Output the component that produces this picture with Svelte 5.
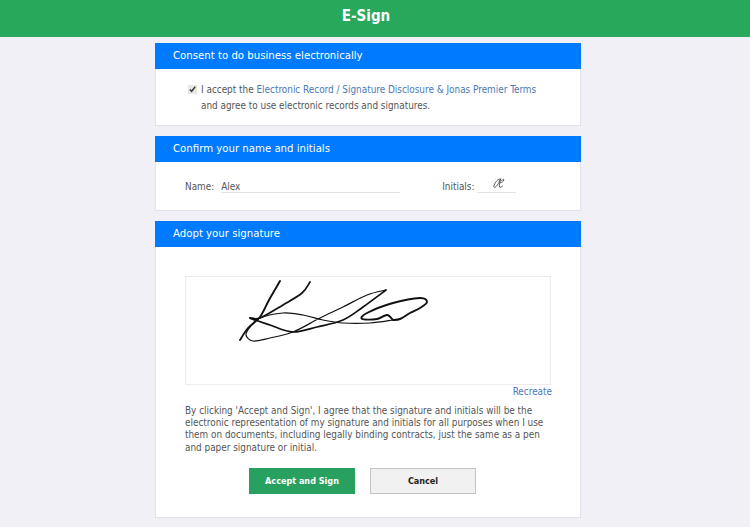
<script>
  let accepted = $state(true);
  let name = $state('Alex');

  // signature traced as point lists, smoothed in toPath
  const strokes = [
    { w: 1.9, pts: [[95, 5], [84, 24], [75, 41], [63, 52], [55, 64]] },
    { w: 1.7, pts: [[125, 6], [117, 17], [98, 29], [75, 42], [65, 42], [85, 49], [108, 56], [132, 51], [158, 44], [178, 31], [201, 14]] },
    { w: 1.2, pts: [[201, 14], [182, 19], [158, 31], [135, 42], [108, 56], [85, 62], [68, 65], [61, 59], [65, 51], [75, 42], [98, 37], [118, 39], [138, 44], [158, 47], [185, 47], [208, 44]] },
    { w: 1.9, pts: [[208, 44], [202, 39], [192, 43], [177, 43], [182, 37], [208, 27], [235, 22], [242, 26], [235, 32], [225, 37], [215, 43], [208, 44]] }
  ];

  function toPath(pts) {
    let d = `M${pts[0][0]} ${pts[0][1]}`;
    for (let i = 0; i < pts.length - 1; i++) {
      const p0 = pts[i - 1] ?? pts[i];
      const p1 = pts[i];
      const p2 = pts[i + 1];
      const p3 = pts[i + 2] ?? p2;
      const c1 = [p1[0] + (p2[0] - p0[0]) / 6, p1[1] + (p2[1] - p0[1]) / 6];
      const c2 = [p2[0] - (p3[0] - p1[0]) / 6, p2[1] - (p3[1] - p1[1]) / 6];
      d += ` C${c1[0]} ${c1[1]} ${c2[0]} ${c2[1]} ${p2[0]} ${p2[1]}`;
    }
    return d;
  }
</script>

<header class="topbar">E-Sign</header>

<main class="page">
  <section class="card consent">
    <h2>Consent to do business electronically</h2>
    <div class="body">
      <label class="accept">
        <input type="checkbox" bind:checked={accepted} />
        <span>I accept the <a href="#terms">Electronic Record / Signature Disclosure &amp; Jonas Premier Terms</a></span>
      </label>
      <p>and agree to use electronic records and signatures.</p>
    </div>
  </section>

  <section class="card confirm">
    <h2>Confirm your name and initials</h2>
    <div class="body fields">
      <span class="label">Name:</span>
      <input class="name" type="text" bind:value={name} />
      <span class="label initials-label">Initials:</span>
      <span class="initials">
        <svg width="14" height="13" viewBox="0 0 16 14" fill="none" stroke="#333" stroke-width="0.9">
          <path d="M9 2C6 2 3 7 2 10C1.500 12 4 12 6 9C8 6 9 3 10 1.500C9 5 8 9 8.500 11C9 12 11 11 12.500 9.500M10 4.500C12 2.500 14 1.500 13.500 3C13 5 11 6 9 6.500" />
        </svg>
      </span>
    </div>
  </section>

  <section class="card adopt">
    <h2>Adopt your signature</h2>
    <div class="body">
      <div class="pad">
        <svg width="366" height="109" viewBox="0 0 366 109" fill="none" stroke="#111" stroke-linecap="round" stroke-linejoin="round">
          {#each strokes as s}
            <path d={toPath(s.pts)} stroke-width={s.w} />
          {/each}
        </svg>
      </div>
      <div class="recreate"><a href="#recreate">Recreate</a></div>
      <p class="legal">By clicking 'Accept and Sign', I agree that the signature and initials will be the electronic representation of my signature and initials for all purposes when I use them on documents, including legally binding contracts, just the same as a pen and paper signature or initial.</p>
      <div class="actions">
        <button type="button" class="primary">Accept and Sign</button>
        <button type="button" class="secondary">Cancel</button>
      </div>
    </div>
  </section>
</main>

<style>
  :global(body) {
    background: #f0f0f6;
    font-family: "DejaVu Sans Condensed", "DejaVu Sans", Verdana, sans-serif;
    font-stretch: condensed;
    color: #555;
  }

  .topbar {
    height: 37px;
    line-height: 33px;
    padding-right: 18px;
    background: #28a85b;
    color: #fff;
    font-size: 15px;
    font-weight: 700;
    text-align: center;
  }

  .page {
    width: 426px;
    margin-left: 155px;
    padding: 6px 0 10px;
    display: flex;
    flex-direction: column;
    gap: 10px;
  }

  .card {
    background: #fff;
    border: 1px solid #e2e2ea;
    border-top: 0;
  }

  h2 {
    margin: 0 -1px;
    height: 25.500px;
    line-height: 25px;
    padding-left: 18px;
    background: #007bff;
    color: #fff;
    font-size: 11.300px;
    font-weight: 400;
  }

  .body {
    font-size: 9.900px;
  }

  .consent .body {
    height: 56.500px;
    padding: 15px 0 0 32px;
    box-sizing: border-box;
  }

  .accept {
    display: flex;
    align-items: center;
    gap: 4px;
    height: 12px;
  }

  .accept input {
    margin: 0;
    width: 9px;
    height: 9px;
    accent-color: #e9e9e9;
  }

  .consent p {
    margin: 4px 0 0 13px;
    line-height: 12px;
  }

  a {
    color: #4a7ab8;
    text-decoration: none;
  }

  .fields {
    height: 48.500px;
    padding: 1px 0 0 29px;
    box-sizing: border-box;
    display: flex;
    align-items: center;
  }

  .name {
    width: 179px;
    margin-left: 7px;
    padding: 1px 0 0;
    height: 11px;
    border: 0;
    border-bottom: 1px solid #e4e4e4;
    font: inherit;
    color: inherit;
    outline: none;
  }

  .initials-label {
    margin-left: 42px;
  }

  .initials {
    width: 39px;
    height: 16px;
    margin-left: 3px;
    padding-left: 4px;
    box-sizing: border-box;
    border-bottom: 1px solid #e4e4e4;
    text-align: center;
    margin-top: -3px;
  }

  .adopt .body {
    padding: 29px 29px 0;
    height: 270.500px;
    box-sizing: border-box;
  }

  .pad {
    width: 366px;
    height: 109px;
    box-sizing: border-box;
    border: 1px solid #ececec;
    margin-right: -1px;
  }

  .pad svg {
    display: block;
    margin: -1px;
  }

  .recreate {
    text-align: right;
    line-height: 13px;
    margin-right: -1px;
  }

  .legal {
    margin: 7px 0 0;
    line-height: 12.400px;
  }

  .actions {
    display: flex;
    gap: 15px;
    margin: 14px 0 0 64px;
  }

  button {
    width: 106px;
    height: 26px;
    padding: 0;
    font: inherit;
    font-size: 9px;
    font-weight: 700;
    border-radius: 0;
  }

  .primary {
    background: #28a160;
    border: 0;
    color: #fff;
  }

  .secondary {
    background: #f1f1f1;
    border: 1px solid #c4c4c4;
    color: #222;
  }
</style>
